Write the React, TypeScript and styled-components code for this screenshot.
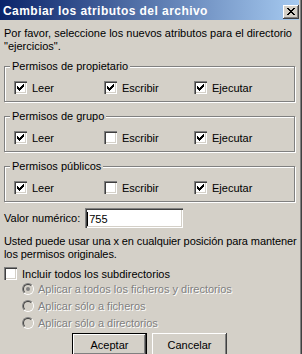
import React from "react";
import styled, { createGlobalStyle, css } from "styled-components";

const Global = createGlobalStyle`
  html, body { margin: 0; padding: 0; background: #D4D0C8; }
  body {
    font-family: "Liberation Sans", Arial, sans-serif;
    font-size: 11px;
    color: #000;
  }
`;

const Window = styled.div`
  width: 302px;
  height: 354px;
  overflow: hidden;
  background: #D4D0C8;
  box-sizing: border-box;
  border-right: 1px solid #404040;
  box-shadow: inset -1px 0 0 #808080, inset -2px 0 0 #D4D0C8;
  display: flex;
  flex-direction: column;
`;

const TitleBar = styled.div`
  height: 20px;
  flex: none;
  margin-right: 2px;
  background: linear-gradient(to right, #0A246A, #A6CAF0);
  display: flex;
  align-items: flex-end;
  justify-content: space-between;
  padding: 0 0 1px 3px;
  box-sizing: border-box;
`;

const TitleText = styled.span`
  color: #fff;
  font-weight: bold;
  font-size: 12px;
  letter-spacing: 0.45px;
  line-height: 14px;
  padding-bottom: 1px;
`;

const CloseBtn = styled.div`
  width: 16px;
  height: 14px;
  box-sizing: border-box;
  background: #D4D0C8;
  box-shadow: inset -1px -1px 0 #404040, inset 1px 1px 0 #fff, inset -2px -2px 0 #808080;
  display: flex;
  align-items: center;
  justify-content: center;
  padding: 0 1px 1px 0;
`;

const Body = styled.div`
  padding: 7px 6px 0 4px;
  display: flex;
  flex-direction: column;
`;

const Para = styled.p<{ $tight?: boolean }>`
  margin: 0;
  line-height: 13px;
  white-space: nowrap;
  letter-spacing: ${(p) => (p.$tight ? "-0.09px" : "0")};
`;

const Group = styled.fieldset`
  margin: 0;
  padding: 8px 0 7px 9px;
  border: 1px solid #808080;
  box-shadow: inset 1px 1px 0 #fff, 1px 1px 0 #fff;
  display: grid;
  grid-template-columns: 90px 90px 1fr;
  min-width: 0;
`;

const Legend = styled.legend`
  padding: 0 2px;
  margin-left: -4px;
  line-height: 13px;
  background: #D4D0C8;
`;

const Check = styled.label`
  display: flex;
  align-items: center;
  gap: 5px;
  height: 13px;
  white-space: nowrap;
`;

const Box = styled.span`
  width: 13px;
  height: 13px;
  box-sizing: border-box;
  background: #fff;
  box-shadow: inset 1px 1px 0 #808080, inset 2px 2px 0 #404040, inset -1px -1px 0 #fff, inset -2px -2px 0 #D4D0C8;
  display: flex;
  align-items: center;
  justify-content: center;
  flex: none;
`;

const ValueRow = styled.div`
  display: flex;
  align-items: center;
  gap: 5px;
  height: 20px;
`;

const Input = styled.div`
  width: 98px;
  height: 20px;
  box-sizing: border-box;
  background: #fff;
  box-shadow: inset 1px 1px 0 #808080, inset 2px 2px 0 #404040, inset -1px -1px 0 #fff, inset -2px -2px 0 #D4D0C8;
  padding: 1px 0 0 2px;
  display: flex;
  align-items: center;
`;

const Caret = styled.span`
  width: 1px;
  height: 14px;
  background: #000;
  margin-right: 1px;
`;

const Radio = styled.div`
  display: flex;
  align-items: center;
  gap: 4px;
  height: 17px;
  padding-left: 18px;
  color: #808080;
  text-shadow: 1px 1px 0 #fff;
  white-space: nowrap;
`;

const RadioOuter = styled.span`
  width: 12px;
  height: 12px;
  border-radius: 50%;
  box-sizing: border-box;
  border: 1px solid;
  border-color: #808080 #fff #fff #808080;
  flex: none;
  display: flex;
`;

const RadioInner = styled.span<{ $checked?: boolean }>`
  flex: 1;
  border-radius: 50%;
  border: 1px solid;
  border-color: #404040 #D4D0C8 #D4D0C8 #404040;
  background: #D4D0C8;
  display: flex;
  align-items: center;
  justify-content: center;
  ${(p) =>
    p.$checked &&
    css`
      &::after {
        content: "";
        width: 4px;
        height: 4px;
        border-radius: 50%;
        background: #808080;
      }
    `}
`;

const Buttons = styled.div`
  display: flex;
  justify-content: center;
  gap: 5px;
`;

const Button = styled.div<{ $default?: boolean }>`
  width: 75px;
  height: 23px;
  flex: none;
  box-sizing: border-box;
  display: flex;
  align-items: center;
  justify-content: center;
  background: #D4D0C8;
  box-shadow: inset -1px -1px 0 #404040, inset 1px 1px 0 #fff, inset -2px -2px 0 #808080;
  ${(p) =>
    p.$default &&
    css`
      border: 1px solid #000;
    `}
`;

const Gap = styled.div<{ $h: number }>`
  height: ${(p) => p.$h}px;
  flex: none;
`;

const CheckMark = () => (
  <svg width="7" height="7" viewBox="0 0 7 7" shapeRendering="crispEdges">
    <path d="M6 0h1v3h-1zM5 1h1v3h-1zM4 2h1v3h-1zM3 3h1v3h-1zM2 4h1v3h-1zM1 3h1v3h-1zM0 2h1v3h-1z" fill="#000" />
  </svg>
);

const CB = ({ label, checked }: { label: string; checked?: boolean }) => (
  <Check>
    <Box>{checked && <CheckMark />}</Box>
    {label}
  </Check>
);

const RB = ({ label, checked }: { label: string; checked?: boolean }) => (
  <Radio>
    <RadioOuter>
      <RadioInner $checked={checked} />
    </RadioOuter>
    {label}
  </Radio>
);

const PermGroup = ({ title, vals }: { title: string; vals: boolean[] }) => (
  <Group>
    <Legend>{title}</Legend>
    <CB label="Leer" checked={vals[0]} />
    <CB label="Escribir" checked={vals[1]} />
    <CB label="Ejecutar" checked={vals[2]} />
  </Group>
);

export default function App() {
  return (
    <>
      <Global />
      <Window>
        <TitleBar>
          <TitleText>Cambiar los atributos del archivo</TitleText>
          <CloseBtn>
            <svg width="8" height="7" viewBox="0 0 8 7" shapeRendering="crispEdges">
              <path d="M0 0h2v1h-2zM6 0h2v1h-2zM1 1h2v1h-2zM5 1h2v1h-2zM2 2h4v1h-4zM3 3h2v1h-2zM2 4h4v1h-4zM1 5h2v1h-2zM5 5h2v1h-2zM0 6h2v1h-2zM6 6h2v1h-2z" fill="#000" />
            </svg>
          </CloseBtn>
        </TitleBar>
        <Body>
          <Para>
            Por favor, seleccione los nuevos atributos para el directorio
            <br />
            "ejercicios".
          </Para>
          <Gap $h={7} />
          <PermGroup title="Permisos de propietario" vals={[true, true, true]} />
          <Gap $h={8} />
          <PermGroup title="Permisos de grupo" vals={[true, false, true]} />
          <Gap $h={8} />
          <PermGroup title="Permisos públicos" vals={[true, false, true]} />
          <Gap $h={6} />
          <ValueRow>
            <span>Valor numérico:</span>
            <Input>
              <Caret />
              755
            </Input>
          </ValueRow>
          <Gap $h={7} />
          <Para $tight>
            Usted puede usar una x en cualquier posición para mantener
            <br />
            los permisos originales.
          </Para>
          <Gap $h={6} />
          <CB label="Incluir todos los subdirectorios" />
          <RB label="Aplicar a todos los ficheros y directorios" checked />
          <RB label="Aplicar sólo a ficheros" />
          <RB label="Aplicar sólo a directorios" />
          <Gap $h={2} />
          <Buttons>
            <Button $default>Aceptar</Button>
            <Button>Cancelar</Button>
          </Buttons>
        </Body>
      </Window>
    </>
  );
}
